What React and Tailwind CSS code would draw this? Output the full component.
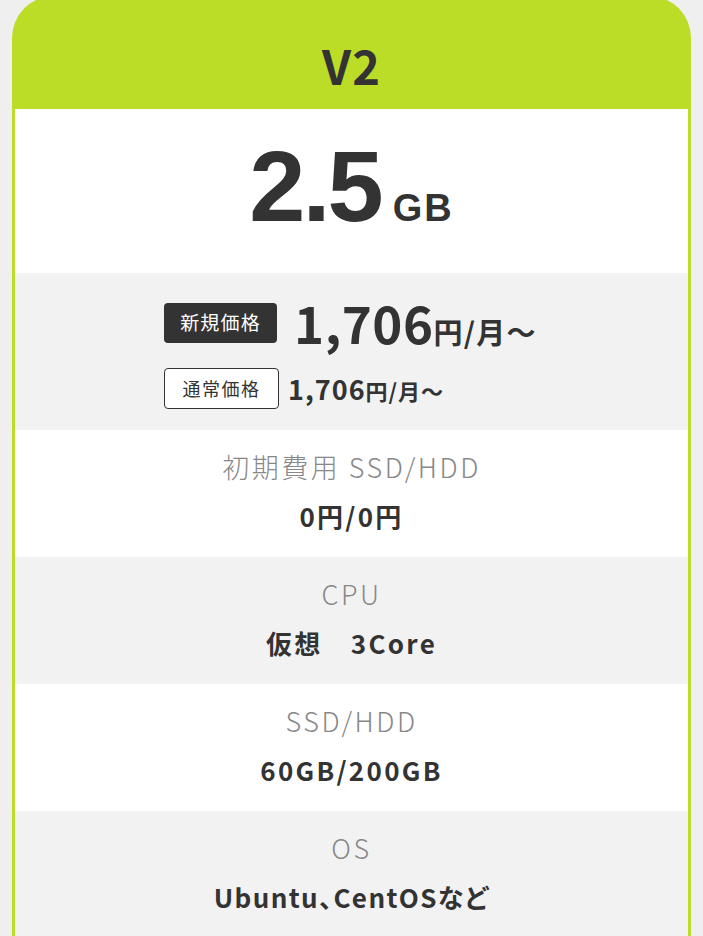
export default function App() {
  const font = { fontFamily: '"Noto Sans CJK JP", "Noto Sans", sans-serif' };
  const rows = [
    { label: "初期費用 SSD/HDD", value: "0円/0円", bg: "bg-white", v: "tracking-[2.3px]" },
    { label: "CPU", value: "仮想　3Core", bg: "bg-[#f2f2f2]", v: "tracking-[2.3px]" },
    { label: "SSD/HDD", value: "60GB/200GB", bg: "bg-white", v: "tracking-[2.3px]" },
    { label: "OS", value: "Ubuntu、CentOSなど", bg: "bg-[#f2f2f2]", v: "tracking-[1.4px] [font-feature-settings:'palt']" },
  ];
  return (
    <div className="h-[936px] overflow-hidden bg-[#efefef] px-[12px]" style={font}>
      <div className="-mt-[4px] h-[1000px] overflow-hidden rounded-t-[42px] border-x-[3px] border-t-[3px] border-[#bcdd27] bg-[#bcdd27] text-[#333]">
        <div className="flex h-[110px] items-center justify-center pt-[21px]">
          <span className="text-[47px] font-bold leading-none tracking-[1px]">V2</span>
        </div>
        <div className="flex h-[164px] items-center justify-center bg-white">
          <span className="flex items-baseline gap-[12px] pb-[10px]" style={{ fontFamily: '"Liberation Sans", Arial, sans-serif' }}>
            <span className="text-[101px] font-bold leading-none tracking-[-3px]">2.5</span>
            <span className="text-[38px] font-bold leading-none tracking-[2px]">GB</span>
          </span>
        </div>
        <div className="flex h-[157px] items-center justify-center bg-[#f2f2f2] pr-[2px]">
          <div className="flex flex-col items-start gap-[20px] pt-[3px]">
            <div className="flex items-center gap-[17px]">
              <span className="flex h-[40px] w-[113px] items-center justify-center rounded-[4px] bg-[#333] text-[19px] tracking-[1.2px] text-white">新規価格</span>
              <span className="flex items-baseline font-bold">
                <span className="text-[51px] leading-none tracking-[0.5px]">1,706</span>
                <span className="text-[29px] leading-none tracking-[1.3px]">円/月〜</span>
              </span>
            </div>
            <div className="flex items-center gap-[9px]">
              <span className="flex h-[41px] w-[115px] items-center justify-center rounded-[4px] border border-[#333] bg-white text-[18px] tracking-[1.5px]">通常価格</span>
              <span className="flex items-baseline font-bold">
                <span className="text-[27px] leading-none tracking-[1px]">1,706</span>
                <span className="text-[22px] leading-none tracking-[1px]">円/月〜</span>
              </span>
            </div>
          </div>
        </div>
        {rows.map((r) => (
          <div key={r.label} className={`flex h-[127px] flex-col items-center justify-center gap-[23px] pb-[6px] ${r.bg}`}>
            <span className="text-[27px] font-light leading-none tracking-[2.5px] text-[#888]">{r.label}</span>
            <span className={`text-[26px] font-bold leading-none ${r.v}`}>{r.value}</span>
          </div>
        ))}
      </div>
    </div>
  );
}
